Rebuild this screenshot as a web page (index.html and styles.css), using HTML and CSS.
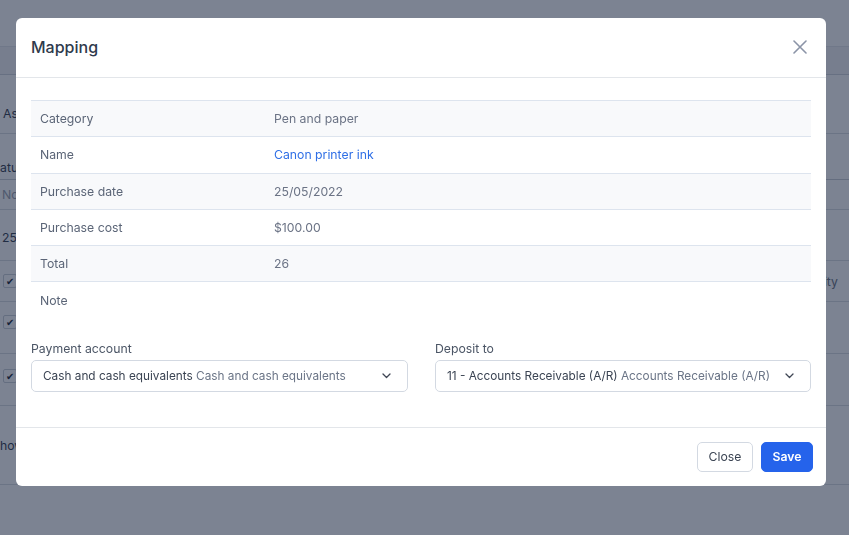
FILE: index.html
```html
<!DOCTYPE html>
<html lang="en">
<head>
<meta charset="utf-8">
<title>Mapping</title>
<link rel="stylesheet" href="styles.css">
</head>
<body>
<div class="page">
  <div class="pg-top"></div>
  <div class="pg-band"></div>
  <div class="pg-row r1"><span class="pg-text">Assets</span></div>
  <div class="pg-row r2"><span class="pg-text">atus</span></div>
  <div class="pg-row r3"><span class="pg-text muted">None</span></div>
  <div class="pg-row r4"><span class="pg-text">25</span></div>
  <div class="pg-row r5"><span class="pg-check">&#10004;</span><span class="pg-text right">Quantity</span></div>
  <div class="pg-row r6"><span class="pg-check">&#10004;</span></div>
  <div class="pg-row r7"><span class="pg-check">&#10004;</span></div>
  <div class="pg-row r8"><span class="pg-text">howing</span></div>
</div>

<div class="overlay">
  <div class="modal">
    <div class="modal-header">
      <h2 class="modal-title">Mapping</h2>
      <button class="modal-close" aria-label="Close">
        <svg width="14" height="14" viewBox="0 0 14 14"><path d="M1 1 L13 13 M13 1 L1 13" stroke="#8b94a7" stroke-width="1.6" stroke-linecap="round" fill="none"/></svg>
      </button>
    </div>
    <div class="modal-body">
      <table class="info">
        <tr><td class="k">Category</td><td class="v">Pen and paper</td></tr>
        <tr><td class="k">Name</td><td class="v"><a class="link" href="#">Canon printer ink</a></td></tr>
        <tr><td class="k">Purchase date</td><td class="v">25/05/2022</td></tr>
        <tr><td class="k">Purchase cost</td><td class="v">$100.00</td></tr>
        <tr><td class="k">Total</td><td class="v">26</td></tr>
        <tr class="last"><td class="k">Note</td><td class="v"></td></tr>
      </table>
      <div class="form-grid">
        <div class="field">
          <label class="field-label">Payment account</label>
          <div class="select">
            <span class="select-text">Cash and cash equivalents <span class="sub">Cash and cash equivalents</span></span>
            <svg class="chev" width="9" height="6" viewBox="0 0 9 6"><path d="M1 1 L4.5 4.5 L8 1" stroke="#3f4654" stroke-width="1.3" fill="none" stroke-linecap="round" stroke-linejoin="round"/></svg>
          </div>
        </div>
        <div class="field">
          <label class="field-label">Deposit to</label>
          <div class="select">
            <span class="select-text">11 - Accounts Receivable (A/R) <span class="sub">Accounts Receivable (A/R)</span></span>
            <svg class="chev" width="9" height="6" viewBox="0 0 9 6"><path d="M1 1 L4.5 4.5 L8 1" stroke="#3f4654" stroke-width="1.3" fill="none" stroke-linecap="round" stroke-linejoin="round"/></svg>
          </div>
        </div>
      </div>
    </div>
    <div class="modal-footer">
      <button class="btn btn-light">Close</button>
      <button class="btn btn-primary">Save</button>
    </div>
  </div>
</div>
</body>
</html>
```

FILE: styles.css
```css
* { box-sizing: border-box; }
html, body { margin: 0; padding: 0; }
body {
  font-family: Inter, "Noto Sans", "Liberation Sans", sans-serif;
  background: #ffffff;
  width: 849px;
  height: 535px;
  overflow: hidden;
  color: #374151;
}

/* background page */
.page { width: 849px; }
.pg-top { height: 47px; background: #ffffff; border-bottom: 1px solid #e5e7eb; }
.pg-band { height: 28px; background: #f3f4f6; border-bottom: 1px solid #d1d5db; }
.pg-row {
  display: flex;
  align-items: center;
  justify-content: space-between;
  border-bottom: 1px solid #d9dde3;
  font-size: 12.25px;
  color: #374151;
  padding-left: 0;
}
.r1 { height: 59px; align-items: flex-end; padding-bottom: 12px; padding-left: 3px; }
.r2 { height: 46px; align-items: flex-end; padding-bottom: 4px; border-bottom-color: #c9ced6; }
.r3 { height: 30px; padding-left: 2px; }
.r4 { height: 51px; padding-left: 2px; align-items: flex-start; padding-top: 20px; }
.r5 { height: 41px; padding-left: 2px; }
.r6 { height: 52px; padding-left: 2px; align-items: flex-start; padding-top: 13px; }
.r7 { height: 52px; padding-left: 2px; align-items: flex-start; padding-top: 15px; }
.r8 { height: 79px; border-bottom: 1px solid #d9dde3; }
.pg-text { font-size: 12.25px; }
.pg-text.muted { color: #9ca3af; }
.pg-text.right { margin-right: 11px; color: #6b7280; }
.pg-check {
  width: 14px; height: 14px;
  border: 1px solid #cbd0d8;
  border-radius: 2px;
  font-size: 10px;
  line-height: 12px;
  text-align: center;
  color: #1e293b;
  margin-left: 1px;
}

/* overlay and modal */
.overlay {
  position: fixed;
  inset: 0;
  background: rgba(17, 30, 57, 0.55);
  padding: 18px 0 0 16px;
}
.modal {
  width: 810px;
  height: 468px;
  background: #ffffff;
  border-radius: 6px;
  display: flex;
  flex-direction: column;
}
.modal-header {
  height: 60px;
  border-bottom: 1px solid #e3e6ea;
  display: flex;
  align-items: center;
  justify-content: space-between;
  padding: 0 19px 1px 15px;
}
.modal-title {
  margin: 0;
  font-size: 16px;
  font-weight: 500;
  color: #2f3a4c;
}
.modal-close {
  border: 0;
  background: none;
  padding: 0;
  width: 14px;
  height: 14px;
  display: flex;
}

.modal-body {
  padding: 22px 15px 0 15px;
  height: 349px;
}
.info {
  width: 780px;
  border-collapse: collapse;
  table-layout: fixed;
  font-size: 12.25px;
}
.info tr { border-top: 1px solid #dde4ee; }
.info tr:nth-child(odd) { background: #f8f9fb; }
.info td {
  height: 36.3px;
  padding: 0 9px;
  vertical-align: middle;
}
.info td.k { width: 234px; color: #5b6577; }
.info td.v { color: #6b7385; }
.link { color: #2f6fe6; text-decoration: none; }

.form-grid {
  margin-top: 23px;
  display: grid;
  grid-template-columns: 377px 376px;
  column-gap: 27px;
}
.field-label {
  display: block;
  font-size: 12.25px;
  color: #4b5565;
  line-height: 16px;
  margin-bottom: 3px;
}
.select {
  height: 32px;
  border: 1px solid #d3d9e2;
  border-radius: 5px;
  display: flex;
  align-items: center;
  justify-content: space-between;
  padding: 0 16px 0 11px;
  font-size: 11.8px;
}
.select-text { color: #3b4453; white-space: nowrap; }
.select-text .sub { color: #6b7587; }
.chev { flex: none; }

.modal-footer {
  border-top: 1px solid #e3e6ea;
  flex: 1;
  display: flex;
  justify-content: flex-end;
  align-items: center;
  gap: 8px;
  padding: 0 13px 1px 0;
}
.btn {
  height: 30px;
  border-radius: 5px;
  font-family: inherit;
  font-size: 12.25px;
  padding: 0 10px;
  cursor: pointer;
}
.btn-light {
  width: 56px;
  background: #ffffff;
  border: 1px solid #d3d9e2;
  color: #3b4453;
}
.btn-primary {
  width: 52px;
  background: #2563eb;
  border: 1px solid #2563eb;
  color: #ffffff;
  font-weight: 600;
}
```
